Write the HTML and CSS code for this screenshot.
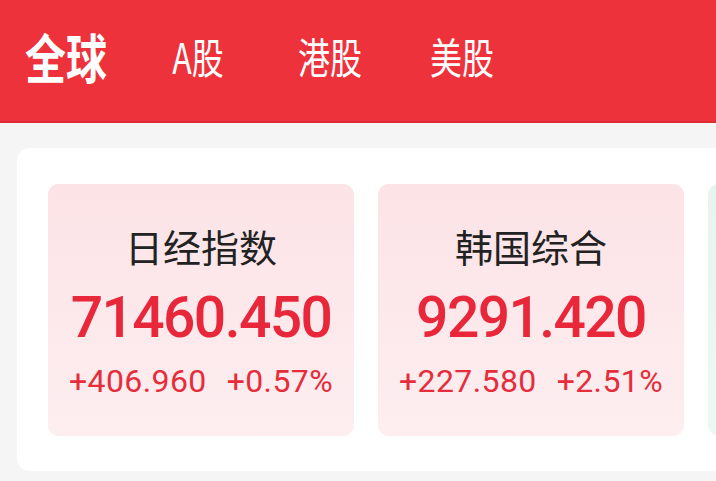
FILE: index.html
```html
<!DOCTYPE html>
<html lang="zh-CN">
<head>
<meta charset="utf-8">
<title>全球指数</title>
<link rel="stylesheet" href="styles.css">
</head>
<body>
<header class="topbar">
  <div class="tab tab-active"><span class="tab-text">全球</span></div>
  <div class="tab"><span class="tab-text">A股</span></div>
  <div class="tab"><span class="tab-text">港股</span></div>
  <div class="tab"><span class="tab-text">美股</span></div>
</header>
<main class="panel">
  <div class="cards">
    <div class="card card-up">
      <div class="card-title">日经指数</div>
      <div class="card-value">71460.450</div>
      <div class="card-change"><span>+406.960</span><span>+0.57%</span></div>
    </div>
    <div class="card card-up">
      <div class="card-title">韩国综合</div>
      <div class="card-value">9291.420</div>
      <div class="card-change"><span>+227.580</span><span>+2.51%</span></div>
    </div>
    <div class="card card-down"></div>
  </div>
</main>
</body>
</html>
```
FILE: styles.css
```css
html, body {
  margin: 0;
  padding: 0;
}
body {
  width: 716px;
  height: 481px;
  overflow: hidden;
  background: #f5f5f5;
  font-family: "Noto Sans CJK SC", "Noto Sans", sans-serif;
}
.topbar {
  height: 123px;
  background: #ee323b;
  display: flex;
  align-items: center;
  padding-bottom: 12px;
  box-sizing: border-box;
  box-shadow: inset 0 -2px 0 rgba(190, 30, 40, 0.35);
}
.tab {
  width: 132px;
  flex: 0 0 132px;
  display: flex;
  justify-content: center;
  color: #ffffff;
}
.tab-text {
  display: inline-block;
  font-size: 32px;
  line-height: 40px;
  font-weight: 400;
  transform: scaleY(1.32);
}
.tab-active .tab-text {
  font-size: 41px;
  font-weight: 700;
  transform: scaleY(1.3);
}
.panel {
  margin: 25px 0 0 17px;
  width: 699px;
  height: 323px;
  background: #ffffff;
  border-radius: 13px 0 0 13px;
  box-sizing: border-box;
  padding: 36px 0 0 31px;
  overflow: hidden;
}
.cards {
  display: flex;
  gap: 24px;
}
.card {
  flex: 0 0 306px;
  height: 252px;
  border-radius: 11px;
  display: flex;
  flex-direction: column;
  align-items: center;
  padding-top: 38px;
  box-sizing: border-box;
}
.card-up {
  background: linear-gradient(180deg, #fce3e6 0%, #fdeef0 100%);
}
.card-down {
  background: linear-gradient(180deg, #e5f5ed 0%, #eef8f3 100%);
}
.card-title {
  font-size: 38px;
  line-height: 48px;
  color: #222222;
  font-weight: 400;
}
.card-value {
  margin-top: 18px;
  font-family: Roboto, "Liberation Sans", sans-serif;
  font-size: 57px;
  line-height: 60px;
  font-weight: 500;
  letter-spacing: -1.6px;
  color: #e8283a;
}
.card-change {
  margin-top: 16px;
  font-family: Roboto, "Liberation Sans", sans-serif;
  font-size: 32px;
  line-height: 35px;
  letter-spacing: 0.4px;
  color: #e52d3c;
  display: flex;
  gap: 20px;
}
```
